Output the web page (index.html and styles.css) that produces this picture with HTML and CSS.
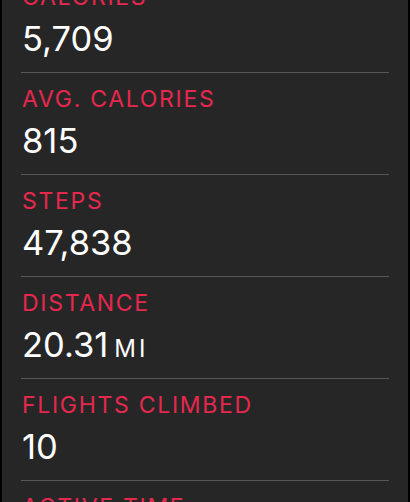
FILE: index.html
```html
<!DOCTYPE html>
<html lang="en">
<head>
<meta charset="utf-8">
<title>Workout Summary</title>
<link rel="stylesheet" href="styles.css">
</head>
<body>
<div class="screen">
  <ul class="stats">
    <li class="stat">
      <div class="label">CALORIES</div>
      <div class="value">5,709</div>
    </li>
    <li class="stat">
      <div class="label">AVG. CALORIES</div>
      <div class="value">815</div>
    </li>
    <li class="stat">
      <div class="label">STEPS</div>
      <div class="value">47,838</div>
    </li>
    <li class="stat">
      <div class="label">DISTANCE</div>
      <div class="value">20.31<span class="unit">MI</span></div>
    </li>
    <li class="stat">
      <div class="label">FLIGHTS CLIMBED</div>
      <div class="value">10</div>
    </li>
    <li class="stat">
      <div class="label">ACTIVE TIME</div>
      <div class="value">&nbsp;</div>
    </li>
  </ul>
</div>
</body>
</html>
```
FILE: styles.css
```css
html, body {
  margin: 0;
  padding: 0;
  background: #000;
  height: 502px;
  overflow: hidden;
}

.screen {
  margin: 0 2px;
  height: 502px;
  background: #262626;
  overflow: hidden;
  font-family: Inter, "Noto Sans", sans-serif;
}

.stats {
  list-style: none;
  margin: -30px 0 0 0;
  padding: 0 19px;
}

.stat {
  border-top: 1px solid #575757;
  padding: 12px 0 13px 1px;
  display: flex;
  flex-direction: column;
  gap: 8px;
}

.label {
  color: #e6284f;
  font-size: 23px;
  line-height: 28px;
  letter-spacing: 1.7px;
}

.value {
  color: #fff;
  font-size: 34.5px;
  line-height: 40px;
  height: 40px;
  font-weight: 400;
}

.unit {
  font-size: 24px;
  line-height: 1;
  letter-spacing: 3px;
  margin-left: 6px;
}
```
